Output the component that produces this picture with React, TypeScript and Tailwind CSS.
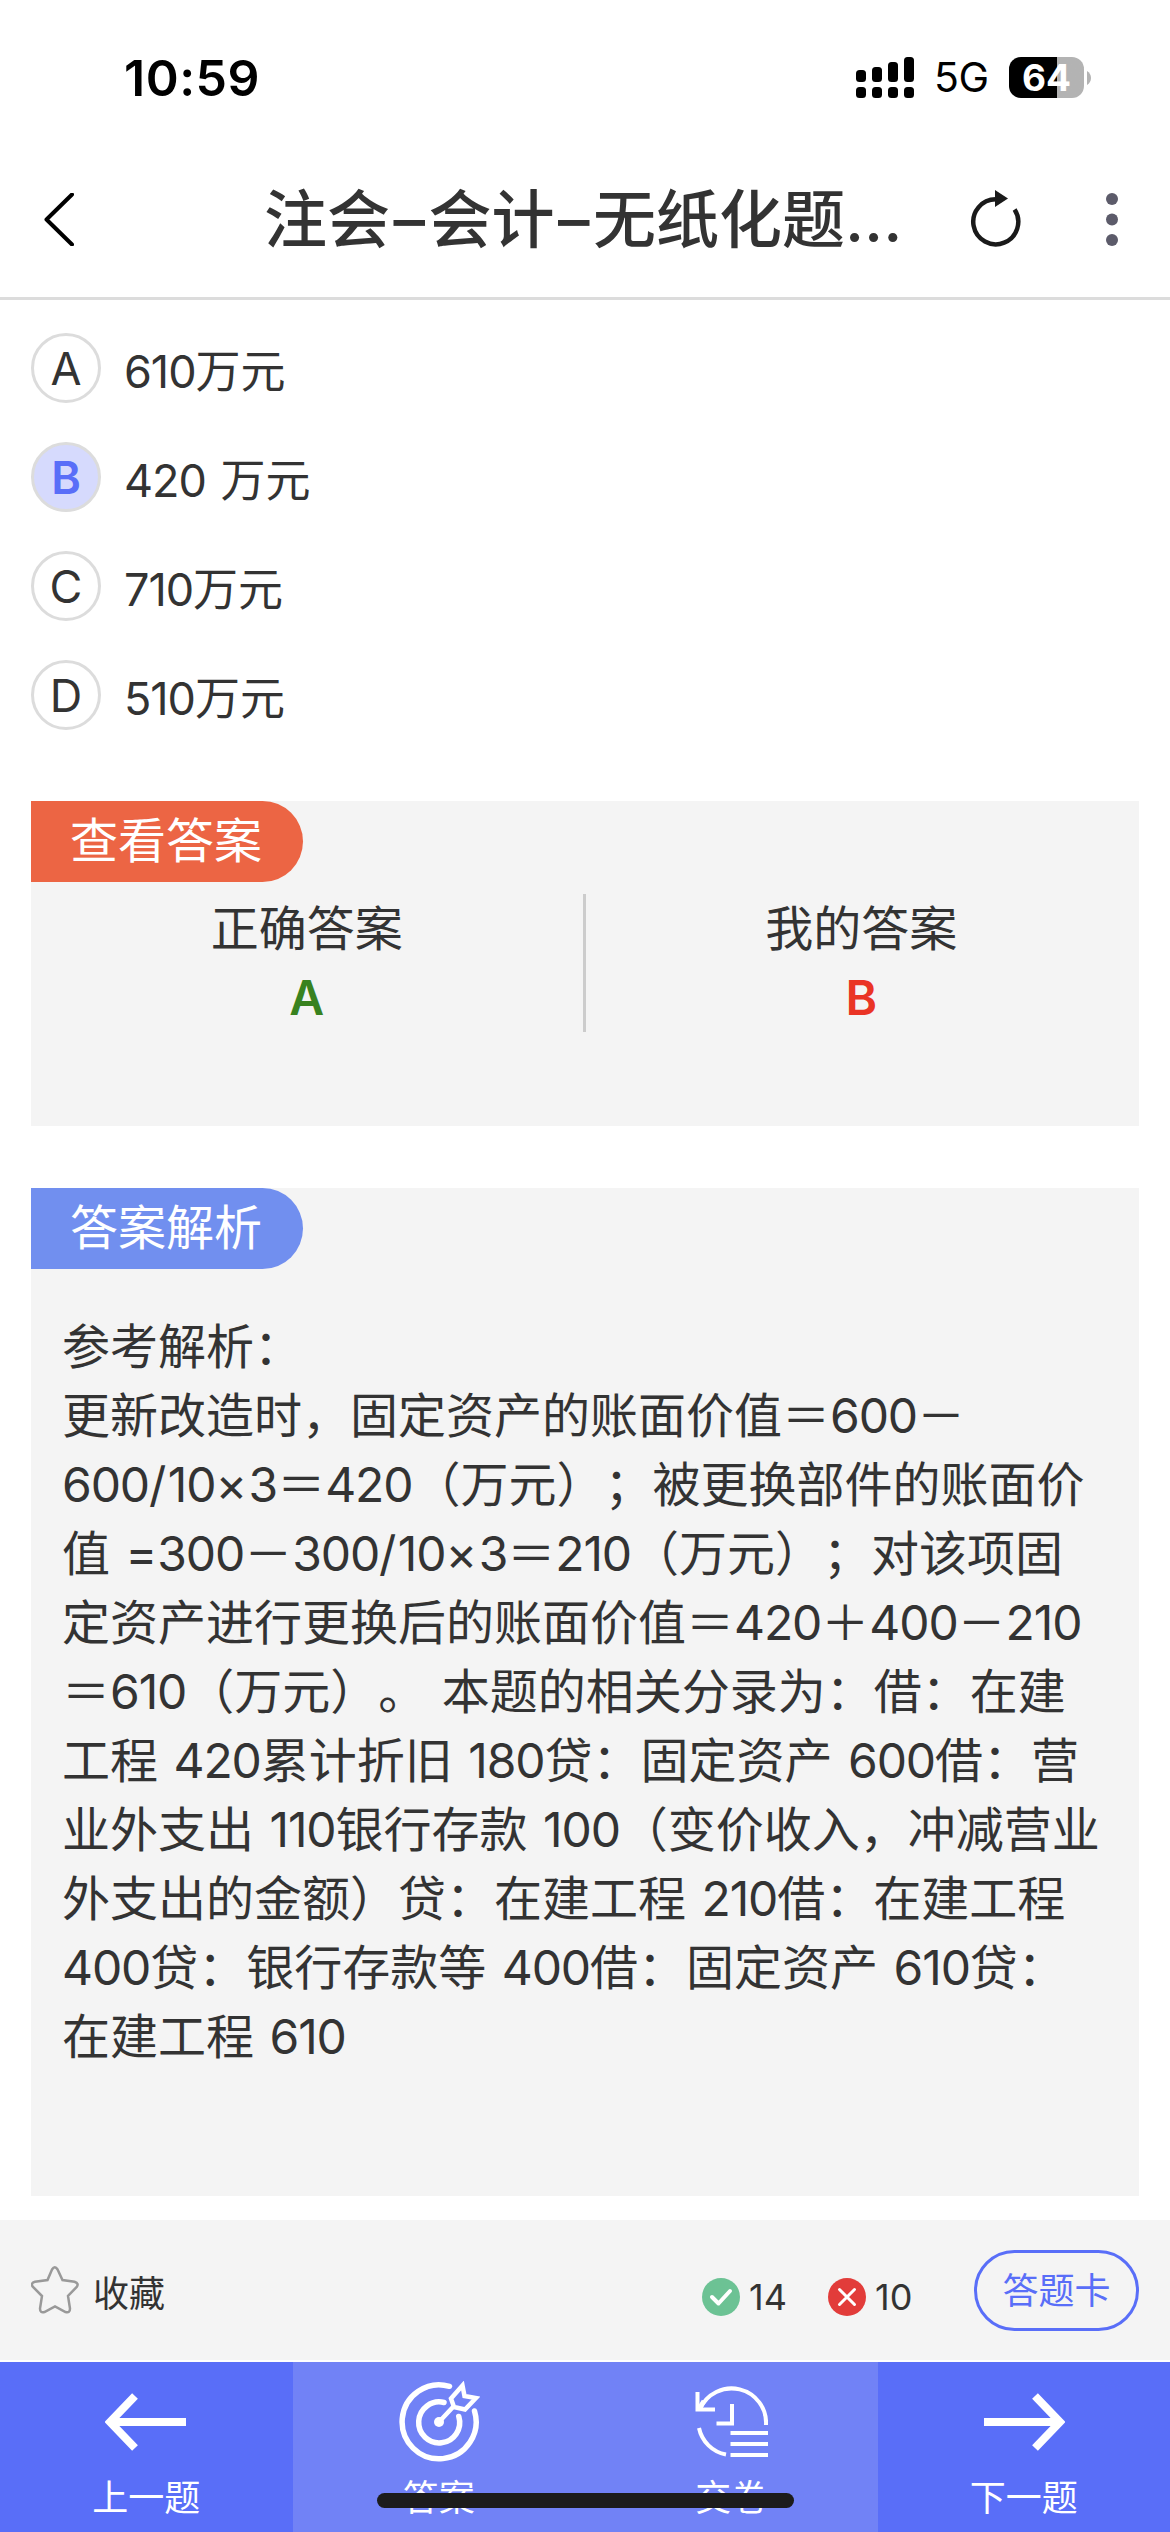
import { useState } from "react";
import clsx from "clsx";

const options = [
  { key: "A", text: "610万元" },
  { key: "B", text: "420 万元" },
  { key: "C", text: "710万元" },
  { key: "D", text: "510万元" },
];

const analysis = [
  "参考解析：",
  "更新改造时，固定资产的账面价值＝600－",
  "600/10×3＝420（万元）；被更换部件的账面价",
  "值 =300－300/10×3＝210（万元）；对该项固",
  "定资产进行更换后的账面价值＝420＋400－210",
  "＝610（万元）。 本题的相关分录为：借：在建",
  "工程 420累计折旧 180贷：固定资产 600借：营",
  "业外支出 110银行存款 100（变价收入，冲减营业",
  "外支出的金额）贷：在建工程 210借：在建工程",
  "400贷：银行存款等 400借：固定资产 610贷：",
  "在建工程 610",
];

// digits run a little tighter than the chinese characters around them
const MixedText = ({ text }: { text: string }) => (
  <>
    {text.split(/(\d+|[/×])/).map((part, i) => (
      <span
        key={i}
        className={clsx(/^\d/.test(part) && "tracking-[-0.023em]", /^[/×]/.test(part) && "tracking-[0.03em]")}
      >
        {part}
      </span>
    ))}
  </>
);

const StatusBar = () => (
  <div className="flex h-[141px] items-start justify-between pl-[124px] pr-[79px] pt-[48px] text-black">
    <span className="text-[50px] leading-[60px] font-semibold tracking-[0.01em]">10:59</span>
    <div className="flex items-center pt-[9px]">
      <svg width="58" height="41" viewBox="0 0 58 41">
        <rect x="0" y="13" width="10" height="12" rx="3.5" />
        <rect x="16" y="10" width="10" height="15" rx="3.5" />
        <rect x="32" y="5" width="10" height="20" rx="3.5" />
        <rect x="48" y="0" width="10" height="25" rx="3.5" />
        <rect x="0" y="30" width="10" height="11" rx="3.5" />
        <rect x="16" y="30" width="10" height="11" rx="3.5" />
        <rect x="32" y="30" width="10" height="11" rx="3.5" />
        <rect x="48" y="30" width="10" height="11" rx="3.5" />
      </svg>
      <span className="ml-[20px] w-[54px] text-[41px] leading-[41px] tracking-[-0.01em]">5G</span>
      <div className="ml-[21px] flex h-[41px] w-[75px] items-center justify-center rounded-[12px] bg-linear-to-r from-black from-64% to-[#b3b3b3] to-64% text-[37px] leading-none font-bold text-white">
        64
      </div>
      <svg className="ml-[3px]" width="4" height="14" viewBox="0 0 4 14">
        <path d="M0 0C2.5 1.5 4 4 4 7s-1.500 5.500-4 7z" fill="#b3b3b3" />
      </svg>
    </div>
  </div>
);

const Header = () => (
  <header className="flex h-[159px] items-start border-b-[3px] border-[#dcdcdc] pl-[44px]">
    <svg className="mt-[52px]" width="30" height="53" viewBox="0 0 30 53" fill="none" stroke="#000" strokeWidth="4">
      <path d="M28 1.500 2.500 26.500 28 51.500" strokeLinecap="round" strokeLinejoin="round" />
    </svg>
    <h1 className="ml-[190px] mt-[33px] w-[660px] whitespace-nowrap text-[63px] leading-[90px] font-medium text-[#333]">
      注会<span className="px-[3.5px]">–</span>会计<span className="px-[3.5px]">–</span>无纸化题...
    </h1>
    <svg className="ml-[45px] mt-[48px]" width="52" height="58" viewBox="0 0 52 58">
      <path d="M27 10.300A22.500 22.500 0 1 0 45.600 20.500" fill="none" stroke="#1a1a1a" strokeWidth="4.500" />
      <path d="M26 1v17l13-8.500z" fill="#1a1a1a" />
    </svg>
    <svg className="ml-[84px] mt-[51px]" width="14" height="54" viewBox="0 0 14 54" fill="#5c5b6a">
      <circle cx="7" cy="7" r="6" />
      <circle cx="7" cy="27.500" r="6" />
      <circle cx="7" cy="48" r="6" />
    </svg>
  </header>
);

const Tag = ({ title, className }: { title: string; className: string }) => (
  <div className={clsx("h-[81px] w-[272px] rounded-r-[41px] pl-[39px] text-[48px] leading-[80px] text-white", className)}>
    {title}
  </div>
);

const Answer = ({ label, value, className }: { label: string; value: string; className: string }) => (
  <div className="flex flex-1 flex-col items-center text-[48px] leading-[69px]">
    <span>{label}</span>
    <span className={clsx("font-semibold", className)}>{value}</span>
  </div>
);

const BackIcon = () => (
  <svg width="82" height="58" viewBox="0 0 82 58" fill="none" stroke="#fff" strokeWidth="8">
    <path d="M81 29H6M30 3 5 29l25 26" />
  </svg>
);

const NextIcon = () => (
  <svg width="82" height="58" viewBox="0 0 82 58" fill="none" stroke="#fff" strokeWidth="8">
    <path d="M1 29h75M52 3l25 26-25 26" />
  </svg>
);

const TargetIcon = () => (
  <svg width="82" height="82" viewBox="0 0 82 82" fill="none" stroke="#fff" strokeWidth="5.500" strokeLinecap="round">
    <path d="M51.500 5.300A37 37 0 1 0 76.500 30" />
    <path d="M46 21.500A20.500 20.500 0 1 0 60.800 35.500" />
    <path d="M41 41 55 26" strokeWidth="4.500" />
    <path d="M64.500 4.500 53 17.500l3 8.500 11 2.500 11-11.500-11.500-2z" strokeWidth="4.500" />
    <circle cx="41" cy="41" r="5" fill="#fff" stroke="none" />
  </svg>
);

const SubmitIcon = () => (
  <svg width="73" height="73" viewBox="0 0 73 73" fill="none" stroke="#fff" strokeWidth="4">
    <path d="M5 24A34.500 34.500 0 0 1 71 40" />
    <path d="M4 43a34 34 0 0 0 27 26.500" />
    <path d="M2.500 7v17.500H20M37 19v19.500H21.500" />
    <path d="M4 24 9 16" strokeWidth="5" />
    <path d="M35.500 48H73M35.500 59H73M35.500 70H73" />
  </svg>
);

const navItems = [
  { title: "上一题", icon: <BackIcon />, className: "bg-[#596ef8]" },
  { title: "答案", icon: <TargetIcon />, className: "bg-[#7182f6]" },
  { title: "交卷", icon: <SubmitIcon />, className: "bg-[#7182f6]" },
  { title: "下一题", icon: <NextIcon />, className: "bg-[#596ef8]" },
];

const App = () => {
  const [selected, setSelected] = useState("B");

  return (
    <div className="relative flex h-[2532px] w-[1170px] flex-col overflow-hidden bg-white font-['Inter','Noto_Sans_CJK_SC',sans-serif] text-[#333] [text-spacing-trim:space-all] [word-spacing:2px]">
      <StatusBar />
      <Header />

      <div className="flex flex-col gap-[39px] px-[31px] pt-[33px]">
        {options.map((item) => (
          <div key={item.key} className="flex h-[70px] items-center" onClick={() => setSelected(item.key)}>
            <span
              className={clsx(
                "flex h-[70px] w-[70px] items-center justify-center rounded-full border-[3px] border-[#dcdcdc] text-[45px] leading-none",
                selected === item.key && "bg-[#d6dafd] font-semibold text-[#596ef8]"
              )}
            >
              {item.key}
            </span>
            <span className="ml-[23px] pt-[7px] text-[45px] leading-[64px]">
              <MixedText text={item.text} />
            </span>
          </div>
        ))}
      </div>

      <section className="mx-[31px] mt-[71px] h-[325px] bg-[#f4f4f4]">
        <Tag title="查看答案" className="bg-[#ec6544]" />
        <div className="mt-[12px] flex h-[138px] pr-[2px]">
          <Answer label="正确答案" value="A" className="text-[#38821f]" />
          <div className="w-[3px] bg-[#ccc]" />
          <Answer label="我的答案" value="B" className="text-[#ea3425]" />
        </div>
      </section>

      <section className="mx-[31px] mt-[62px] h-[1008px] bg-[#f4f4f4]">
        <Tag title="答案解析" className="bg-[#718fef]" />
        <div className="pl-[31px] pt-[43px] text-[48px] leading-[69px] whitespace-nowrap">
          {analysis.map((line) => (
            <div key={line}>
              <MixedText text={line} />
            </div>
          ))}
        </div>
      </section>

      <div className="mt-[24px] flex h-[140px] items-start bg-[#f4f4f4] px-[31px] text-[36px] leading-[54px]">
        <svg className="mt-[46px]" width="48" height="48" viewBox="0 0 48 48" fill="none" stroke="#999" strokeWidth="2.500">
          <path d="M21 3.500q2.800-4.500 5.600 0L31.500 14l12 1.800q5 1.700 2 5.400L37 30l2 12.500q0 5-4.500 3.500L24 40.500 13.500 46Q9 47.500 9 42.500L11 30 2 21q-3-3.700 2-5.200L16.500 14z" />
        </svg>
        <span className="ml-[14px] mt-[47px]">收藏</span>
        <div className="ml-auto mt-[50px] flex items-center">
          <svg width="38" height="38" viewBox="0 0 38 38" fill="none" stroke="#fff" strokeWidth="4">
            <circle cx="19" cy="19" r="19" fill="#6cc294" stroke="none" />
            <path d="m10 19 6.500 6.500L28 13" strokeLinejoin="round" strokeLinecap="round" />
          </svg>
          <span className="ml-[9px] w-[79px]">14</span>
          <svg width="38" height="38" viewBox="0 0 38 38" fill="none" stroke="#fff" strokeWidth="3">
            <circle cx="19" cy="19" r="19" fill="#e23c3a" stroke="none" />
            <path d="m11.500 11.500 15 15M26.500 11.500l-15 15" strokeLinecap="round" />
          </svg>
          <span className="ml-[9px] w-[99px]">10</span>
        </div>
        <button className="mt-[30px] h-[81px] w-[165px] rounded-full border-[3px] border-[#596ef8] text-[#596ef8]">
          答题卡
        </button>
      </div>

      <nav className="mt-[2px] grid h-[170px] grid-cols-4">
        {navItems.map((item) => (
          <div key={item.title} className={clsx("flex flex-col items-center text-[36px] leading-[54px] text-white", item.className)}>
            <div className="flex h-[109px] items-center pt-[10px]">{item.icon}</div>
            <span>{item.title}</span>
          </div>
        ))}
      </nav>

      <div className="absolute left-[377px] top-[2493px] h-[15px] w-[417px] rounded-full bg-[#1c1c1c]" />
    </div>
  );
};

export default App;
